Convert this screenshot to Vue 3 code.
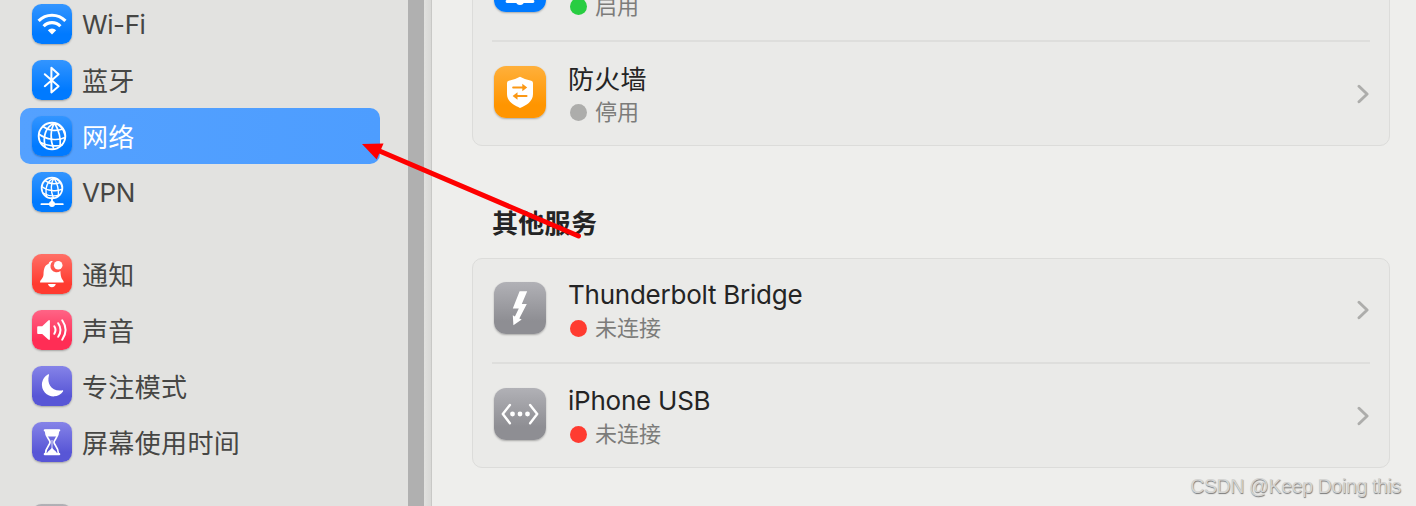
<script setup>
const groups = [
  [
    { id: 'wifi', label: 'Wi-Fi', tone: 'blue', latin: true },
    { id: 'bluetooth', label: '蓝牙', tone: 'blue' },
    { id: 'network', label: '网络', tone: 'blue', selected: true },
    { id: 'vpn', label: 'VPN', tone: 'blue', latin: true },
  ],
  [
    { id: 'bell', label: '通知', tone: 'red' },
    { id: 'sound', label: '声音', tone: 'pink' },
    { id: 'moon', label: '专注模式', tone: 'indigo' },
    { id: 'hourglass', label: '屏幕使用时间', tone: 'indigo' },
  ],
  [{ id: 'general', label: '', tone: 'gray' }],
]
const cards = [
  {
    id: 'main',
    title: '',
    rows: [
      { id: 'vpn', name: '', status: '启用', dot: 'on', tone: 'blue', latin: true },
      { id: 'firewall', name: '防火墙', status: '停用', dot: 'off', tone: 'orange' },
    ],
  },
  {
    id: 'other',
    title: '其他服务',
    rows: [
      { id: 'thunderbolt', name: 'Thunderbolt Bridge', status: '未连接', dot: 'down', tone: 'gray', latin: true },
      { id: 'usb', name: 'iPhone USB', status: '未连接', dot: 'down', tone: 'gray', latin: true },
    ],
  },
]
</script>

<template>
  <div class="window">
    <aside class="sidebar">
      <ul v-for="(group, g) in groups" :key="g" class="group">
        <li v-for="item in group" :key="item.id" class="item" :class="{ selected: item.selected }">
          <span class="tile" :class="item.tone">
            <svg viewBox="0 0 40 40" fill="none" stroke="#fff" stroke-linecap="round" stroke-linejoin="round">
              <g v-if="item.id === 'wifi'" stroke-width="3.1" stroke-linecap="butt">
                <path d="M6.6 16.9A18.6 18.6 0 0 1 33.4 16.9" />
                <path d="M11.6 22.2A11.6 11.6 0 0 1 28.4 22.2" />
                <path d="M20 30.6L15.8 26.3A6 6 0 0 1 24.2 26.3Z" fill="#fff" stroke="none" />
              </g>
              <path v-else-if="item.id === 'bluetooth'" d="M12.8 14.2L26.6 26.2L19.4 32.4V7.8L26.6 14.2L12.8 26.2" stroke-width="2" />
              <g v-else-if="item.id === 'network'" stroke-width="1.7">
                <circle cx="20" cy="20" r="13.3" stroke-width="1.9" />
                <path d="M22.5 7C14 11 11 20 13 30.8M22.5 7C18.5 13 17.8 24 21.8 33M22.5 7C25.5 12 29 21 28.2 30M22.5 7C28 9 32 14 33 19" />
                <path d="M11 10.5C16 14.5 24 15.6 30.8 13M6.8 18C14 23.8 26 25 33 21.5M8.5 26.5C15 30 24 30.8 30 29" />
              </g>
              <g v-else-if="item.id === 'vpn'">
                <g stroke-width="1.35">
                  <circle cx="20" cy="16" r="10.4" stroke-width="1.7" />
                  <path d="M22 5.8C15.3 9 13 16 14.5 24.4M22 5.8C18.8 10.5 18.3 19 21.4 26M22 5.8C24.3 9.7 27 16.8 26.4 23.8M22 5.8C26.3 7.4 29.4 11.3 30.2 15.2" />
                  <path d="M13 8.6C17 11.7 23 12.5 28.4 10.5M9.7 14.4C15.3 19 24.7 19.9 30.2 17.2M11 21C16 23.9 23 24.4 27.8 23" />
                </g>
                <path d="M20 26V32M9.4 32.2H30.8" stroke-width="1.8" />
                <circle cx="20" cy="32" r="3" fill="#fff" stroke="none" />
              </g>
              <g v-else-if="item.id === 'bell'" fill="#fff" stroke="none">
                <path d="M8.4 28.5Q7.6 28.4 8.2 27.2C9.5 24.8 11.2 24 11.5 20.5C11.8 14.5 12.6 11.2 16.6 9.7C17.2 7.4 19 6.6 20.8 7.3A6 6 0 0 0 28.4 17C28.8 24.5 30 24.7 31.5 27.2Q32.1 28.4 31.3 28.5Z" />
                <path d="M16 30.1H23.8A4 4 0 0 1 16 30.1Z" />
                <circle cx="26.2" cy="11.2" r="4.3" />
              </g>
              <g v-else-if="item.id === 'sound'">
                <path d="M6 16.2H10.2L16.3 10.4Q17.7 9.5 17.9 11V29Q17.7 30.4 16.3 29.6L10.2 24H6Q5.2 24 5.2 23V17.2Q5.2 16.2 6 16.2Z" fill="#fff" stroke="none" />
                <path d="M22.3 16.3Q24.7 20 22.3 23.8M26.2 13.2Q30.8 20 26.2 26.8M30.2 10.3Q37 20 30.2 29.7" stroke-width="2" />
              </g>
              <path v-else-if="item.id === 'moon'" d="M15.8 8.5C16.7 8 17.3 8.4 16.9 9.5C14.7 17.5 19.3 25.6 29.8 24.4C31 24.1 31.4 24.6 31 25.6A11.7 11.7 0 1 1 15.8 8.5Z" fill="#fff" stroke="none" />
              <g v-else-if="item.id === 'hourglass'">
                <path d="M12.8 8.3H27.2M12.8 32.2H27.2" stroke-width="2.2" />
                <path d="M13.5 8.5C13.5 16 18 17.2 18 20.3S13.5 24.8 13.5 32H26.5C26.5 24.8 22 23.2 22 20.3S26.5 16 26.5 8.5Z" stroke-width="1.7" />
                <path d="M13.5 8H26.5L25.2 14.5H14.8ZM15 31.2C16 28.4 19.3 28 19.6 25.6V18H20.4V25.6C20.7 28 24 28.4 25 31.2Z" fill="#fff" stroke="none" />
              </g>
            </svg>
          </span>
          <span class="label" :class="{ latin: item.latin }">{{ item.label }}</span>
        </li>
      </ul>
    </aside>
    <div class="scrollbar"></div>
    <div class="edge"></div>
    <main class="content">
      <section v-for="card in cards" :key="card.id" class="section">
        <h2 v-if="card.title" class="heading">{{ card.title }}</h2>
        <div class="card">
          <div v-for="row in card.rows" :key="row.id" class="row">
            <span class="tile large" :class="row.tone">
              <svg viewBox="0 0 52 52" fill="none" stroke="#fff" stroke-linecap="round" stroke-linejoin="round">
                <g v-if="row.id === 'vpn'">
                  <circle cx="26" cy="21" r="14" stroke-width="2" />
                  <path d="M26 35V41M13 41.5H39" stroke-width="2.8" />
                  <circle cx="26" cy="41" r="4" fill="#fff" stroke="none" />
                </g>
                <g v-else-if="row.id === 'firewall'">
                  <path d="M26 10.7Q32 14 37.2 14.8Q39 15.2 39 17V28C39 35.5 32 39.5 26 42C20 39.5 13 35.5 13 28V17Q13 15.2 14.8 14.8Q20 14 26 10.7Z" fill="#fff" stroke="none" />
                  <path d="M19.2 21.5H29M32.5 30H23" stroke="#fb9815" stroke-width="2.1" />
                  <path d="M28.3 17.8L33.2 21.5L28.3 25.2ZM23.5 26.3L18.6 30L23.5 33.7Z" fill="#fb9815" stroke="none" />
                </g>
                <path v-else-if="row.id === 'thunderbolt'" d="M25.6 9.2H33.2L27.8 22H32.8L25.3 36.4L27.7 37.6L19.4 43.2L18.8 33.3L20.9 34.5L24.8 26.5H18.8Z" fill="#fff" stroke="none" />
                <g v-else>
                  <path d="M15.9 17L8.8 26L15.9 35.2M36.1 17L43.2 26L36.1 35.2" stroke-width="2.4" />
                  <g fill="#fff" stroke="none">
                    <circle cx="18.5" cy="26" r="2.4" />
                    <circle cx="26" cy="26" r="2.4" />
                    <circle cx="33.5" cy="26" r="2.4" />
                  </g>
                </g>
              </svg>
            </span>
            <div class="info">
              <div class="name" :class="{ latin: row.latin }">{{ row.name }}</div>
              <div class="status"><i class="dot" :class="row.dot"></i>{{ row.status }}</div>
            </div>
            <svg class="chevron" viewBox="0 0 12 20" fill="none" stroke="#adadab" stroke-width="2.9" stroke-linecap="round" stroke-linejoin="round">
              <path d="M2 2.2L10.1 10L2 17.8" />
            </svg>
          </div>
        </div>
      </section>
    </main>
    <svg class="arrow" viewBox="0 0 1416 506">
      <path d="M578.5 236L376 149.5" stroke="#fe0000" stroke-width="5" stroke-linecap="round" />
      <path d="M362 144L383.5 143.6L376.7 159.6Z" fill="#fe0000" />
    </svg>
    <div class="watermark">CSDN @Keep Doing this</div>
  </div>
</template>

<style>
body {
  margin: 0;
}
</style>

<style scoped>
.window {
  position: relative;
  display: flex;
  width: 1416px;
  height: 506px;
  overflow: hidden;
  background: #eeeeec;
  font-family: Inter, "Noto Sans CJK SC", sans-serif;
}
.sidebar {
  box-sizing: border-box;
  flex: 0 0 408px;
  padding: 0 28px 0 20px;
  background: #e2e2e0;
}
.group {
  list-style: none;
  margin: 0 0 26px;
  padding: 0;
}
.group:first-child {
  margin-top: -4px;
}
.item {
  box-sizing: border-box;
  display: flex;
  align-items: center;
  height: 56px;
  padding-left: 12px;
  border-radius: 10px;
  color: #464644;
}
.item.selected {
  background: linear-gradient(90deg, #54a1ff, #4d9dff);
  color: #fff;
}
.label {
  margin-left: 10px;
  padding-top: 3px;
  font-size: 26px;
  letter-spacing: 0.35px;
  line-height: 38px;
  white-space: nowrap;
}
.label.latin {
  padding-top: 1px;
  letter-spacing: -0.4px;
}
.tile {
  flex: none;
  width: 40px;
  height: 40px;
  border-radius: 9.5px;
  box-shadow: 0 1px 2px rgba(0, 0, 0, 0.28);
}
.tile.large {
  width: 52px;
  height: 52px;
  border-radius: 12px;
}
.tile svg {
  display: block;
  width: 100%;
  height: 100%;
}
.blue {
  background: linear-gradient(#3395ff, #007aff 75%);
}
.red {
  background: linear-gradient(#ff7067, #ff3b30 75%);
}
.pink {
  background: linear-gradient(#ff6486, #ff2d55 75%);
}
.indigo {
  background: linear-gradient(#8583e8, #5856d6 75%);
}
.orange {
  background: linear-gradient(#ffb03b, #ff9500 75%);
}
.gray {
  background: linear-gradient(#b1b1b6, #8e8e93 75%);
}
.scrollbar {
  flex: 0 0 16px;
  background: #b0b0b0;
}
.edge {
  box-sizing: border-box;
  flex: 0 0 8px;
  background: linear-gradient(90deg, #e1e1df, #d8d8d6);
  border-right: 1px solid #c8c8c6;
}
.content {
  flex: 1;
  padding: 0 26px 0 40px;
}
.section:first-child {
  margin-top: -64px;
}
.heading {
  height: 68px;
  margin: 44px 0 0 20px;
  color: #242424;
  font-size: 26px;
  font-weight: 700;
  letter-spacing: 0.3px;
  line-height: 68px;
}
.card {
  box-sizing: border-box;
  height: 210px;
  padding: 1px 19px;
  border: 1px solid #dcdcda;
  border-radius: 10px;
  background: #eaeae8;
}
.row {
  box-sizing: border-box;
  display: flex;
  align-items: flex-start;
  height: 102px;
  padding: 22px 0 0 2px;
}
.row + .row {
  height: 104px;
  border-top: 2px solid #dededc;
  padding-top: 24px;
}
.info {
  flex: 1;
  margin: -6px 0 0 22px;
}
.name {
  height: 37px;
  color: #242424;
  font-size: 26px;
  letter-spacing: 0.3px;
  line-height: 40px;
}
.name.latin {
  letter-spacing: -0.24px;
  line-height: 38px;
}
.status {
  display: flex;
  align-items: center;
  height: 30px;
  color: #7c7c7a;
  font-size: 22px;
  line-height: 30px;
}
.dot {
  width: 17px;
  height: 17px;
  margin: 0 8px 0 2px;
  border-radius: 50%;
}
.on {
  background: #28cd41;
}
.off {
  background: #adadab;
}
.down {
  background: #ff3b30;
}
.chevron {
  width: 12px;
  height: 20px;
  margin: 18px 1px 0 0;
}
.arrow {
  position: absolute;
  inset: 0;
  width: 1416px;
  height: 506px;
  pointer-events: none;
}
.watermark {
  position: absolute;
  right: 15px;
  bottom: 8px;
  color: #d4d4d2;
  font-family: "Liberation Sans", sans-serif;
  font-size: 19.5px;
  letter-spacing: -0.35px;
  line-height: 24px;
  text-shadow: 0.5px 0.5px 1px #777;
  white-space: nowrap;
}
</style>
